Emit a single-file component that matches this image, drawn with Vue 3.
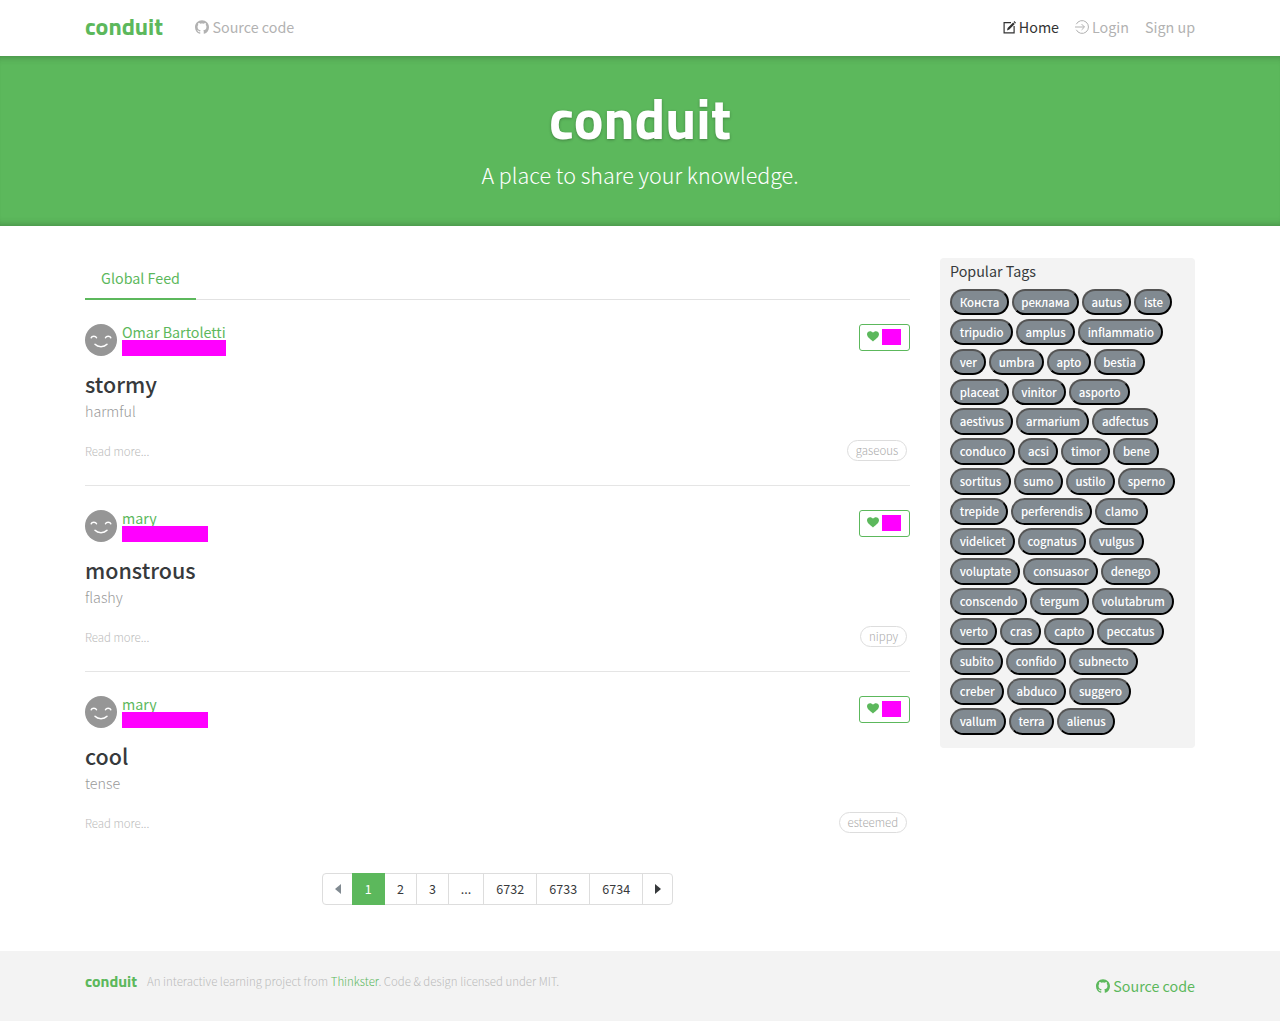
<script setup>
const articles = [
  { author: 'Omar Bartoletti', title: 'stormy', description: 'harmful', tag: 'gaseous', wide: true },
  { author: 'mary', title: 'monstrous', description: 'flashy', tag: 'nippy', wide: false },
  { author: 'mary', title: 'cool', description: 'tense', tag: 'esteemed', wide: false },
]
const tagRows = [
  ['Конста', 'реклама', 'autus', 'iste'],
  ['tripudio', 'amplus', 'inflammatio'],
  ['ver', 'umbra', 'apto', 'bestia'],
  ['placeat', 'vinitor', 'asporto'],
  ['aestivus', 'armarium', 'adfectus'],
  ['conduco', 'acsi', 'timor', 'bene'],
  ['sortitus', 'sumo', 'ustilo', 'sperno'],
  ['trepide', 'perferendis', 'clamo'],
  ['videlicet', 'cognatus', 'vulgus'],
  ['voluptate', 'consuasor', 'denego'],
  ['conscendo', 'tergum', 'volutabrum'],
  ['verto', 'cras', 'capto', 'peccatus'],
  ['subito', 'confido', 'subnecto'],
  ['creber', 'abduco', 'suggero'],
  ['vallum', 'terra', 'alienus'],
]
const pages = ['1', '2', '3', '...', '6732', '6733', '6734']
const githubPath =
  'M256 70.7c-102.6 0-185.9 83.2-185.9 185.9 0 82.1 53.3 151.8 127.1 176.4 9.3 1.7 12.3-4 12.3-8.9V389.4c-51.7 11.3-62.5-21.9-62.5-21.9-8.4-21.5-20.6-27.2-20.6-27.2-16.9-11.5 1.3-11.3 1.3-11.3 18.7 1.3 28.5 19.2 28.5 19.2 16.6 28.4 43.5 20.2 54.1 15.4 1.7-12 6.5-20.2 11.8-24.9-41.3-4.7-84.7-20.6-84.7-91.9 0-20.3 7.3-36.9 19.2-49.9-1.9-4.7-8.3-23.6 1.8-49.2 0 0 15.6-5 51.1 19.1 14.8-4.1 30.7-6.2 46.5-6.3 15.8.1 31.7 2.1 46.6 6.3 35.5-24 51.1-19.1 51.1-19.1 10.1 25.6 3.8 44.5 1.8 49.2 11.9 13 19.1 29.6 19.1 49.9 0 71.4-43.5 87.1-84.9 91.7 6.7 5.8 12.8 17.1 12.8 34.4v51c0 4.9 3 10.7 12.4 8.9 73.8-24.6 127-94.3 127-176.4C441.9 153.9 358.6 70.7 256 70.7z'
</script>

<template>
  <div class="page">
    <nav class="navbar">
      <div class="container bar">
        <a class="brand">conduit</a>
        <a class="link source">
          <svg class="github" viewBox="70 70 372 364"><path :d="githubPath" fill="currentColor" /></svg>
          <span>Source code</span>
        </a>
        <div class="menu">
          <a class="link active">
            <svg class="compose" viewBox="0 0 13 13" fill="none" stroke="currentColor">
              <path d="M8 1.600H1.100v10.300h10V5" stroke-width="1.2" />
              <path d="M4 9.400l.6-2.500 5.500-5.500 1.700 1.700-5.500 5.500zM10.600.9l.8-.8 1.600 1.600-.8.8z" fill="currentColor" stroke="none" />
            </svg>
            <span>Home</span>
          </a>
          <a class="link">
            <svg class="login" viewBox="0 0 14 14" fill="none" stroke="currentColor">
              <path d="M1.300 4.200A6.400 6.400 0 1 1 1.300 9.800M0 7h9.300M6.600 4.100L9.500 7 6.600 9.900" stroke-width="1" />
            </svg>
            <span>Login</span>
          </a>
          <a class="link"><span>Sign up</span></a>
        </div>
      </div>
    </nav>

    <header class="banner">
      <h1>conduit</h1>
      <p>A place to share your knowledge.</p>
    </header>

    <main class="container content">
      <section class="feed">
        <div class="tabs"><a class="tab">Global Feed</a></div>
        <article v-for="a in articles" :key="a.title" class="article">
          <div class="meta">
            <svg class="avatar" viewBox="0 0 32 32">
              <circle cx="16" cy="16" r="16" fill="#969696" />
              <g fill="none" stroke="#fff" stroke-width="1.5" stroke-linecap="round">
                <path d="M6.200 13.700c.7-2 4.500-2 5.300 0M20.500 13.700c.8-2 4.600-2 5.300 0" />
                <path d="M10 20.300c3 3.200 9 3.200 12 0" />
              </g>
            </svg>
            <div class="info">
              <a class="author">{{ a.author }}</a>
              <div class="date" :class="{ wide: a.wide }"></div>
            </div>
            <button class="like">
              <svg viewBox="0 0 12 11"><path d="M6 10.500C4.200 8.700 0 6.200 0 3.200 0 .2 4-1 6 1.800 8-1 12 .2 12 3.200c0 3-4.200 5.500-6 7.300z" fill="#5cb85c" /></svg>
              <i></i>
            </button>
          </div>
          <h2>{{ a.title }}</h2>
          <p class="description">{{ a.description }}</p>
          <div class="bottom">
            <span class="more">Read more...</span>
            <span class="outline-tag">{{ a.tag }}</span>
          </div>
        </article>
        <div class="pagination">
          <a class="page-item arrow off"><svg viewBox="0 0 6 10"><path d="M6 0v10L0 5z" fill="currentColor" /></svg></a>
          <a v-for="p in pages" :key="p" class="page-item" :class="{ current: p === '1', long: p.length === 4, dots: p === '...' }">{{ p }}</a>
          <a class="page-item arrow"><svg viewBox="0 0 6 10"><path d="M0 0v10l6-5z" fill="currentColor" /></svg></a>
        </div>
      </section>
      <aside class="sidebar">
        <p>Popular Tags</p>
        <div class="tags">
          <div v-for="(row, i) in tagRows" :key="i" class="tag-row">
            <button v-for="t in row" :key="t" class="tag">{{ t }}</button>
          </div>
        </div>
      </aside>
    </main>

    <footer class="footer">
      <div class="container foot">
        <a class="foot-brand">conduit</a>
        <span class="note">An interactive learning project from <a>Thinkster</a>. Code &amp; design licensed under MIT.</span>
        <a class="link foot-source">
          <svg class="github" viewBox="70 70 372 364"><path :d="githubPath" fill="currentColor" /></svg>
          <span>Source code</span>
        </a>
      </div>
    </footer>
  </div>
</template>

<style>
body {
  background: #fff;
}
</style>

<style scoped>
* {
  box-sizing: border-box;
}
.page {
  height: 1021px;
  display: flex;
  flex-direction: column;
  overflow: hidden;
  font-family: "Source Sans Pro", "Noto Sans CJK SC", sans-serif;
  font-size: 14.31px;
  line-height: 24px;
  color: #373a3c;
}
h1, h2, p {
  margin: 0;
}
.container {
  width: 1110px;
  margin: 0 auto;
}
.navbar {
  height: 56px;
  flex: none;
}
.bar {
  display: flex;
  height: 54px;
  align-items: center;
}
.brand, .foot-brand, .banner h1 {
  font-family: "Titillium Web", "Noto Sans", sans-serif;
  font-weight: 700;
}
.brand {
  width: 78px;
  color: #5cb85c;
  font-size: 24px;
  margin: 0 32px 2px 0;
  white-space: nowrap;
}
.link {
  display: flex;
  align-items: center;
  gap: 3px;
  color: #b2b2b2;
  white-space: nowrap;
}
.link.source {
  gap: 3.5px;
}
.link.active {
  color: #333;
}
.github {
  width: 14px;
  height: 14px;
}
.compose {
  width: 13px;
  height: 13px;
}
.login {
  width: 14px;
  height: 14px;
}
.menu {
  margin-left: auto;
  display: flex;
  gap: 16px;
}
.banner {
  height: 170px;
  flex: none;
  padding-top: 32px;
  background: #5cb85c;
  box-shadow: inset 0 8px 8px -8px rgba(0, 0, 0, 0.3), inset 0 -8px 8px -8px rgba(0, 0, 0, 0.3);
  color: #fff;
  text-align: center;
}
.banner h1 {
  font-size: 56px;
  line-height: 62px;
  height: 62px;
  margin-bottom: 7px;
  text-shadow: 0 1px 3px rgba(0, 0, 0, 0.3);
}
.banner p {
  font-size: 21.47px;
  line-height: 36px;
  font-weight: 300;
}
.content {
  display: flex;
  gap: 30px;
  align-items: flex-start;
  height: 725px;
  flex: none;
  padding-top: 32px;
}
.feed {
  width: 825px;
}
.tabs {
  height: 42px;
  border-bottom: 1px solid #e2e2e2;
}
.tab {
  display: inline-block;
  height: 42px;
  width: 111px;
  line-height: 39px;
  text-align: center;
  color: #5cb85c;
  border-bottom: 2px solid #5cb85c;
  vertical-align: top;
}
.article {
  height: 186px;
  padding-top: 24px;
  border-top: 1px solid #e5e5e5;
}
.article:nth-child(2) {
  height: 185px;
  border-top: 0;
}
.meta {
  display: flex;
  height: 32px;
}
.avatar {
  width: 32px;
  height: 32px;
  margin-right: 5px;
}
.author {
  display: block;
  height: 16px;
  line-height: 15px;
  color: #5cb85c;
}
.date {
  width: 86px;
  height: 16px;
  background: #f0f;
  position: relative;
}
.date.wide {
  width: 104px;
}
.like {
  margin-left: auto;
  width: 51px;
  height: 27px;
  border: 1px solid #5cb85c;
  border-radius: 3px;
  background: #fff;
  display: flex;
  padding: 4px 0 0 7px;
  align-items: flex-start;
  gap: 3px;
}
.like svg {
  width: 12px;
  height: 11px;
  margin-top: 2px;
}
.like i {
  width: 19px;
  height: 16px;
  background: #f0f;
}
.article h2 {
  font-size: 21.47px;
  line-height: 26px;
  font-weight: 500;
  margin-top: 15px;
}
.description {
  margin-top: 2px;
  font-weight: 300;
  color: #999;
  line-height: 24px;
}
.bottom {
  display: flex;
  justify-content: space-between;
  align-items: flex-start;
  margin-top: 17px;
  padding-right: 3px;
}
.more {
  font-size: 11.45px;
  line-height: 23px;
  font-weight: 300;
  color: #bbb;
}
.outline-tag {
  font-size: 11.45px;
  line-height: 19px;
  height: 21px;
  border: 1px solid #ddd;
  border-radius: 11px;
  padding: 0 7.85px;
  font-weight: 300;
  color: #aaa;
}
.pagination {
  display: flex;
  width: 351px;
  height: 32px;
  margin: 16px 0 0 237px;
  border: 1px solid #ddd;
  border-radius: 4px;
}
.page-item {
  width: 32px;
  border-right: 1px solid #ddd;
  font-size: 12.52px;
  line-height: 30px;
  text-align: center;
}
.page-item.arrow {
  width: 30px;
  display: flex;
  align-items: center;
  justify-content: center;
}
.page-item.arrow svg {
  width: 6px;
  height: 10px;
}
.page-item.off {
  width: 29px;
  color: #818a91;
  border-right: 0;
}
.page-item.arrow:last-child {
  width: 29px;
  border-right: 0;
}
.page-item.current {
  width: 33px;
  height: 32px;
  margin-top: -1px;
  line-height: 32px;
  padding-left: 0.6px;
  background: #5cb85c;
  border-color: #5cb85c;
  color: #fff;
}
.page-item.long {
  width: 53px;
  padding-left: 0.5px;
}
.page-item.dots {
  width: 35px;
}
.sidebar {
  width: 255px;
  height: 490px;
  padding: 1px 10px 0;
  border-radius: 4px;
  background: #f3f3f3;
}
.tags {
  margin-top: 5.61px;
}
.tag-row {
  display: flex;
  gap: 3px;
  height: 26px;
  margin-bottom: 3.97px;
}
.tag {
  font-family: inherit;
  font-size: 11.45px;
  line-height: 22px;
  letter-spacing: -0.08px;
  font-weight: 500;
  height: 26.6px;
  padding: 0 7.4px 1.4px 7.7px;
  border: 2px outset #000;
  border-radius: 14px;
  background: #818a91;
  color: #fff;
  white-space: nowrap;
}
.footer {
  height: 70px;
  flex: none;
  background: #f3f3f3;
}
.foot {
  display: flex;
  height: 70px;
  padding-top: 18px;
}
.foot-brand {
  width: 52px;
  margin-right: 10px;
  color: #5cb85c;
  font-size: 16px;
}
.note {
  font-size: 11.45px;
  letter-spacing: 0.012px;
  font-weight: 300;
  color: #bbb;
}
.note a {
  color: #5cb85c;
}
.foot-source {
  margin: 5px 0 0 auto;
  height: 24px;
  color: #5cb85c;
}
</style>
